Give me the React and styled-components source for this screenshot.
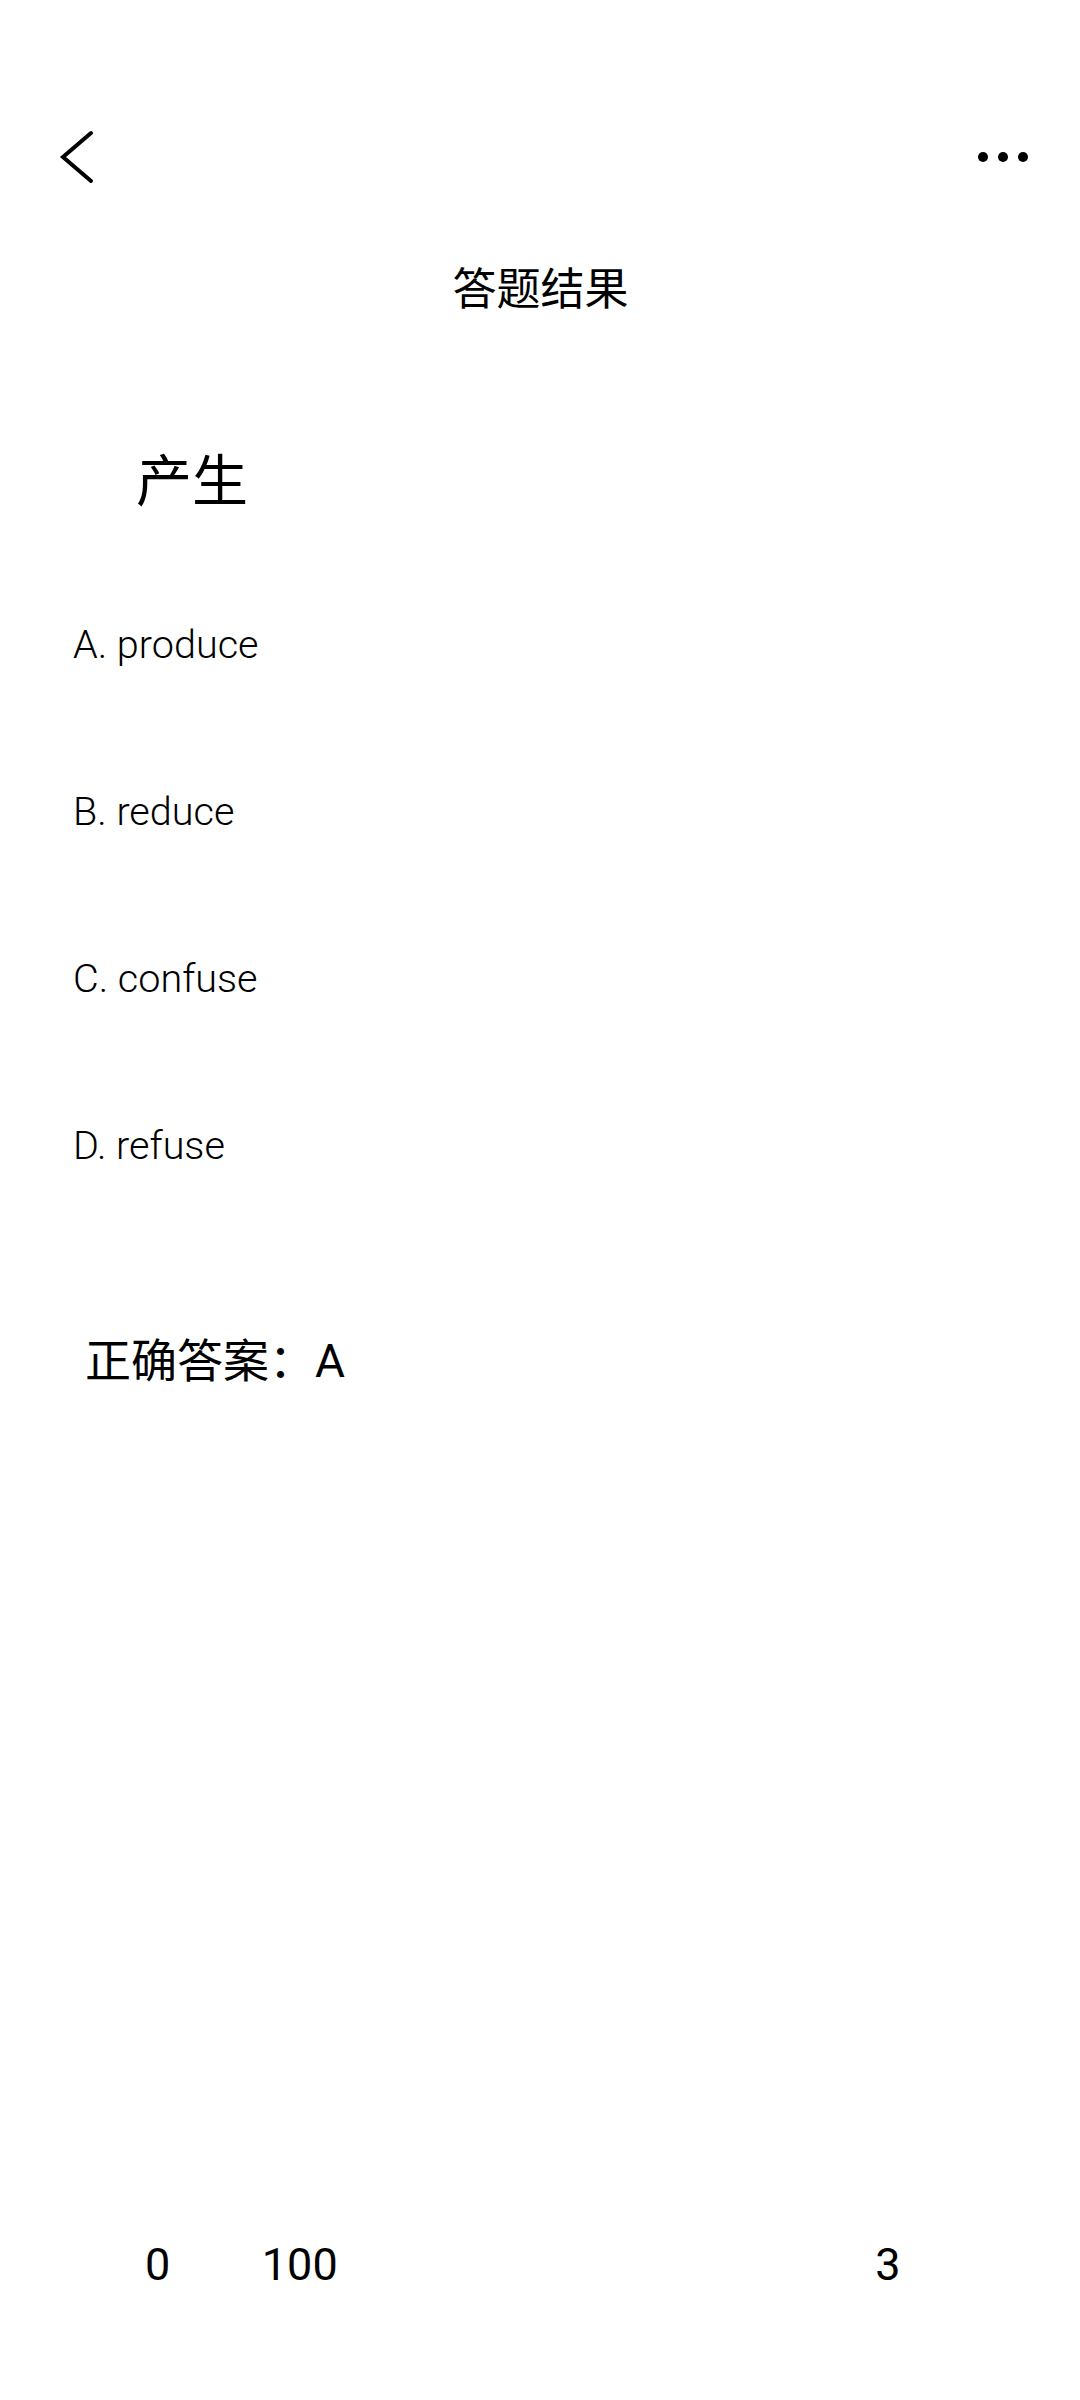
import React from "react";
import styled, { createGlobalStyle } from "styled-components";

const GlobalStyle = createGlobalStyle`
  html, body {
    margin: 0;
    padding: 0;
    background: #ffffff;
  }
  body {
    font-family: Roboto, "Noto Sans CJK SC", sans-serif;
    color: #000000;
  }
  #root {
    min-height: 100vh;
  }
`;

const Page = styled.div`
  min-height: 100vh;
  display: flex;
  flex-direction: column;
  background: #ffffff;
  box-sizing: border-box;
`;

const TopBar = styled.header`
  margin-top: 94px;
  height: 126px;
  display: flex;
  align-items: center;
  justify-content: space-between;
  padding: 0 52px 0 59px;
`;

const IconButton = styled.button`
  border: none;
  background: none;
  padding: 0;
  margin: 0;
  display: flex;
  align-items: center;
  justify-content: center;
  cursor: pointer;
`;

const Title = styled.h1`
  margin: 44px 0 0;
  padding-left: 1px;
  text-align: center;
  font-family: "Noto Sans CJK SC", sans-serif;
  font-weight: 400;
  font-size: 44px;
  line-height: 44px;
`;

const Question = styled.div`
  margin: 141px 0 0 136px;
  font-family: "Noto Sans CJK SC", sans-serif;
  font-size: 56px;
  line-height: 56px;
`;

const Options = styled.ul`
  list-style: none;
  margin: 117px 0 0;
  padding: 0 0 0 73px;
  display: flex;
  flex-direction: column;
  gap: 121px;
`;

const Option = styled.li`
  font-family: Roboto, sans-serif;
  font-weight: 300;
  font-size: 39.6px;
  line-height: 46px;
  height: 46px;
`;

const Answer = styled.div`
  margin: 169px 0 0 85px;
  font-family: Roboto, "Noto Sans CJK SC", sans-serif;
  font-size: 46px;
  line-height: 46px;
`;

const Footer = styled.footer`
  margin-top: auto;
  padding: 0 0 109px 145px;
  display: flex;
  align-items: center;
  height: 53px;
  box-sizing: content-box;
`;

const FooterItem = styled.span`
  margin-left: ${(p) => p.$offset || 0}px;
  font-family: Roboto, sans-serif;
  font-size: 45px;
  line-height: 53px;
`;

const BackIcon = () => (
  <svg width="36" height="54" viewBox="0 0 36 54" fill="none">
    <path
      d="M32 3 L4 27 L32 51"
      stroke="#000"
      strokeWidth="4"
      strokeLinecap="round"
      strokeLinejoin="miter"
    />
  </svg>
);

const MoreIcon = () => (
  <svg width="50" height="10" viewBox="0 0 50 10">
    <circle cx="5" cy="5" r="5" fill="#000" />
    <circle cx="25" cy="5" r="5" fill="#000" />
    <circle cx="45" cy="5" r="5" fill="#000" />
  </svg>
);

const options = ["A. produce", "B. reduce", "C. confuse", "D. refuse"];

export default function App() {
  return (
    <>
      <GlobalStyle />
      <Page>
        <TopBar>
          <IconButton aria-label="back">
            <BackIcon />
          </IconButton>
          <IconButton aria-label="more">
            <MoreIcon />
          </IconButton>
        </TopBar>
        <Title>答题结果</Title>
        <Question>产生</Question>
        <Options>
          {options.map((o) => (
            <Option key={o}>{o}</Option>
          ))}
        </Options>
        <Answer>正确答案：A</Answer>
        <Footer>
          <FooterItem>0</FooterItem>
          <FooterItem $offset={91.5}>100</FooterItem>
          <FooterItem $offset={537.5}>3</FooterItem>
        </Footer>
      </Page>
    </>
  );
}
